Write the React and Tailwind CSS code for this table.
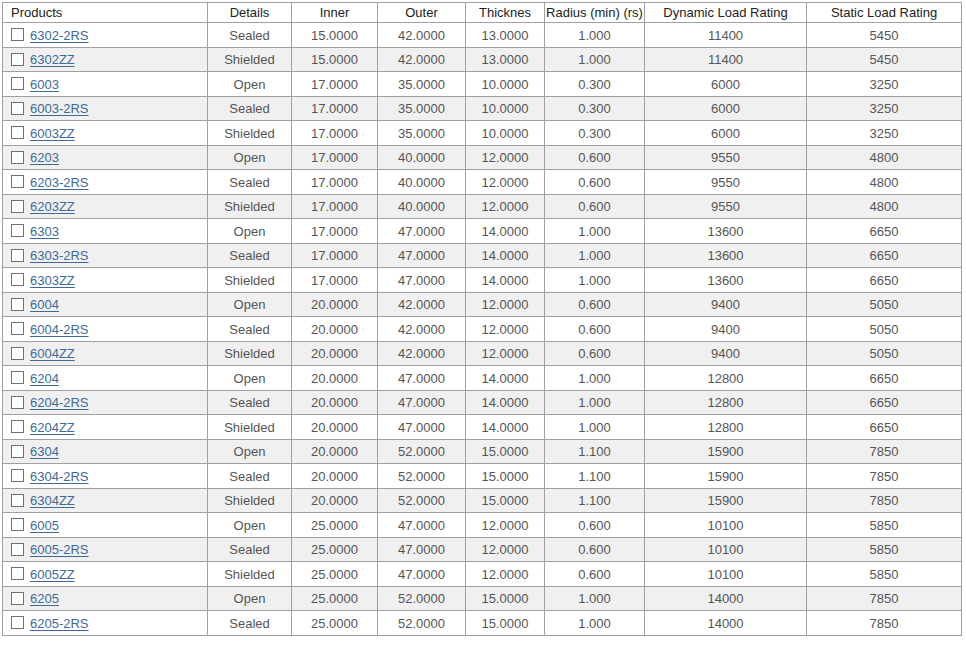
import React from 'react';

const rows = [
  ['6302-2RS', 'Sealed', '15.0000', '42.0000', '13.0000', '1.000', '11400', '5450'],
  ['6302ZZ', 'Shielded', '15.0000', '42.0000', '13.0000', '1.000', '11400', '5450'],
  ['6003', 'Open', '17.0000', '35.0000', '10.0000', '0.300', '6000', '3250'],
  ['6003-2RS', 'Sealed', '17.0000', '35.0000', '10.0000', '0.300', '6000', '3250'],
  ['6003ZZ', 'Shielded', '17.0000', '35.0000', '10.0000', '0.300', '6000', '3250'],
  ['6203', 'Open', '17.0000', '40.0000', '12.0000', '0.600', '9550', '4800'],
  ['6203-2RS', 'Sealed', '17.0000', '40.0000', '12.0000', '0.600', '9550', '4800'],
  ['6203ZZ', 'Shielded', '17.0000', '40.0000', '12.0000', '0.600', '9550', '4800'],
  ['6303', 'Open', '17.0000', '47.0000', '14.0000', '1.000', '13600', '6650'],
  ['6303-2RS', 'Sealed', '17.0000', '47.0000', '14.0000', '1.000', '13600', '6650'],
  ['6303ZZ', 'Shielded', '17.0000', '47.0000', '14.0000', '1.000', '13600', '6650'],
  ['6004', 'Open', '20.0000', '42.0000', '12.0000', '0.600', '9400', '5050'],
  ['6004-2RS', 'Sealed', '20.0000', '42.0000', '12.0000', '0.600', '9400', '5050'],
  ['6004ZZ', 'Shielded', '20.0000', '42.0000', '12.0000', '0.600', '9400', '5050'],
  ['6204', 'Open', '20.0000', '47.0000', '14.0000', '1.000', '12800', '6650'],
  ['6204-2RS', 'Sealed', '20.0000', '47.0000', '14.0000', '1.000', '12800', '6650'],
  ['6204ZZ', 'Shielded', '20.0000', '47.0000', '14.0000', '1.000', '12800', '6650'],
  ['6304', 'Open', '20.0000', '52.0000', '15.0000', '1.100', '15900', '7850'],
  ['6304-2RS', 'Sealed', '20.0000', '52.0000', '15.0000', '1.100', '15900', '7850'],
  ['6304ZZ', 'Shielded', '20.0000', '52.0000', '15.0000', '1.100', '15900', '7850'],
  ['6005', 'Open', '25.0000', '47.0000', '12.0000', '0.600', '10100', '5850'],
  ['6005-2RS', 'Sealed', '25.0000', '47.0000', '12.0000', '0.600', '10100', '5850'],
  ['6005ZZ', 'Shielded', '25.0000', '47.0000', '12.0000', '0.600', '10100', '5850'],
  ['6205', 'Open', '25.0000', '52.0000', '15.0000', '1.000', '14000', '7850'],
  ['6205-2RS', 'Sealed', '25.0000', '52.0000', '15.0000', '1.000', '14000', '7850'],
];

const headers = ['Details', 'Inner', 'Outer', 'Thicknes', 'Radius (min) (rs)', 'Dynamic Load Rating', 'Static Load Rating'];

const App = () => {
  return (
    <div className="p-[2px] bg-white min-h-[659px] font-['Liberation_Sans',Arial,sans-serif] text-[13px]">
      <table className="table-fixed border-collapse w-[959px]">
        <colgroup>
          <col className="w-[205px]" />
          <col className="w-[84px]" />
          <col className="w-[86px]" />
          <col className="w-[88px]" />
          <col className="w-[79px]" />
          <col className="w-[100px]" />
          <col className="w-[162px]" />
          <col className="w-[155px]" />
        </colgroup>
        <thead>
          <tr className="h-[20px]">
            <th className="border border-[#a0a0a0] text-left font-normal text-[#222] pl-[8px] leading-none">Products</th>
            {headers.map((h) => (
              <th key={h} className="border border-[#a0a0a0] text-center font-normal text-[#222] leading-none whitespace-nowrap">{h}</th>
            ))}
          </tr>
        </thead>
        <tbody>
          {rows.map((r, i) => (
            <tr key={r[0]} className={`h-[24.5px] ${i % 2 === 1 ? 'bg-[#f0f0f0]' : 'bg-white'}`}>
              <td className="border border-[#a0a0a0] pl-[8px] pt-[1px] leading-none">
                <div className="flex items-center gap-[6px]">
                  <span className="w-[13px] h-[13px] border border-[#707070] bg-white shrink-0 -mt-[1px]" />
                  <a href="#" className="text-[#3d6a9a] underline underline-offset-2">{r[0]}</a>
                </div>
              </td>
              {r.slice(1).map((c, j) => (
                <td key={j} className="border border-[#a0a0a0] text-center text-[#555] pt-[1px] leading-none">{c}</td>
              ))}
            </tr>
          ))}
        </tbody>
      </table>
    </div>
  );
};

export default App;
